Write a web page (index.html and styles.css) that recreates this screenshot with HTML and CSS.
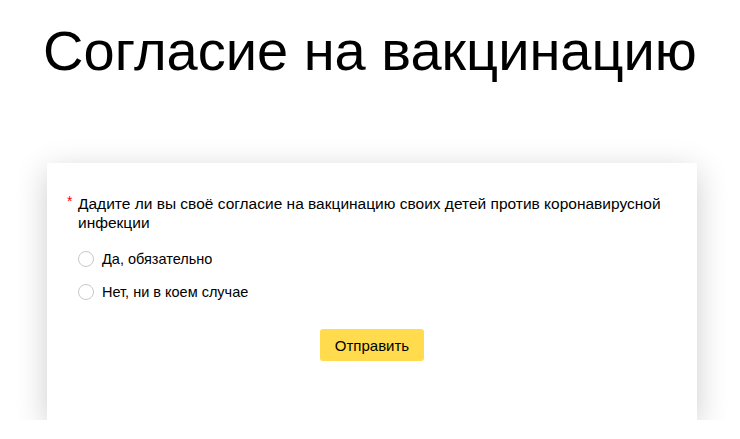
FILE: index.html
```html
<!DOCTYPE html>
<html lang="ru">
<head>
<meta charset="utf-8">
<link rel="stylesheet" href="styles.css">
</head>
<body>
<h1 class="title">Согласие на вакцинацию</h1>
<form class="card">
  <div class="question">
    <span class="req">*</span>
    <span class="qtext">Дадите ли вы своё согласие на вакцинацию своих детей против коронавирусной инфекции</span>
  </div>
  <label class="option"><span class="radio"></span><span>Да, обязательно</span></label>
  <label class="option"><span class="radio"></span><span>Нет, ни в коем случае</span></label>
  <div class="actions"><button type="button" class="submit">Отправить</button></div>
</form>
</body>
</html>
```
FILE: styles.css
```css
html, body {
  margin: 0;
  padding: 0;
  background: #fff;
  font-family: "Liberation Sans", Arial, sans-serif;
  color: #000;
}
.title {
  margin: 0;
  padding-top: 20px;
  font-size: 56px;
  font-weight: normal;
  line-height: 62px;
  text-align: center;
}
.card {
  width: 650px;
  margin: 81px 0 0 47px;
  background: #fff;
  box-shadow: 0 8px 30px rgba(0, 0, 0, 0.2);
  padding: 31px 0 0 0;
  box-sizing: border-box;
  height: 257px;
}
.question {
  display: flex;
  padding-left: 20px;
  padding-right: 30px;
  font-size: 15.5px;
  line-height: 19px;
}
.req {
  color: #f00;
  width: 11px;
  flex: none;
  font-size: 14px;
  line-height: 14px;
}
.option {
  display: flex;
  align-items: center;
  gap: 8px;
  padding-left: 31px;
  font-size: 14.5px;
  line-height: 18px;
  margin-top: 18px;
}
.option + .option { margin-top: 15px; }
.radio {
  width: 14px;
  height: 14px;
  border: 1px solid #c8c8c8;
  border-radius: 50%;
  background: #fff;
  flex: none;
}
.actions {
  display: flex;
  justify-content: center;
  margin-top: 28px;
}
.submit {
  width: 104px;
  height: 32px;
  border: none;
  border-radius: 3px;
  background: #ffdb4d;
  font-family: "Liberation Sans", Arial, sans-serif;
  font-size: 15px;
  color: #000;
  padding: 0;
}
```
